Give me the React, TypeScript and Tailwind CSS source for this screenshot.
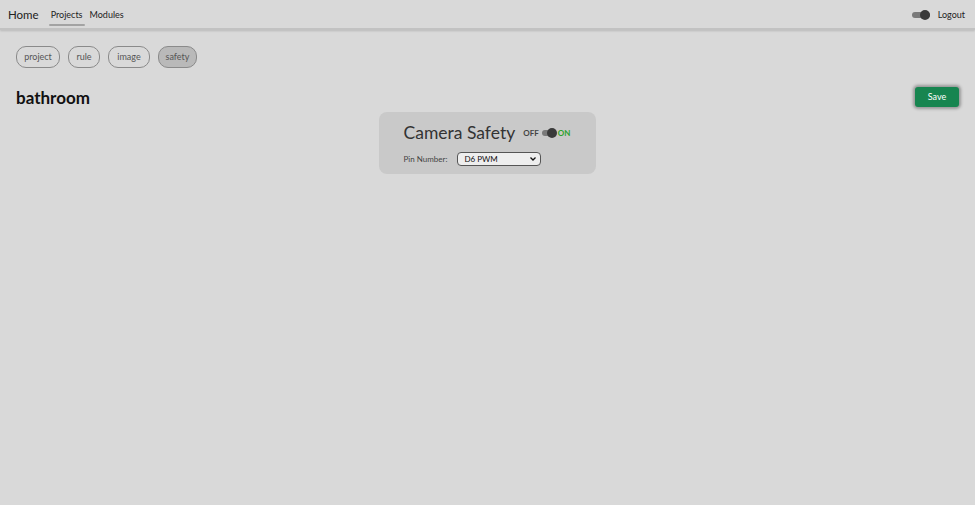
import { useState } from "react";

const tabs = [
  { label: "project", w: "w-[44px]" },
  { label: "rule", w: "w-[32px]" },
  { label: "image", w: "w-[42px]" },
  { label: "safety", w: "w-[39px]" },
];

export default function App() {
  const [active] = useState("safety");

  return (
    <div
      className="min-h-[505px] w-full bg-[#d9d9d9] text-[#222]"
      style={{ fontFamily: 'Lato, "Noto Sans", sans-serif' }}
    >
      {/* top bar */}
      <nav className="flex h-[30px] items-center justify-between border-b-2 border-[#c2c2c2] bg-[#d9d9d9] px-2 pt-[1px] shadow-[0_1px_2px_rgba(0,0,0,0.15)]">
        <div className="flex items-center">
          <span className="text-[11.5px] text-[#222]">Home</span>
          <div className="ml-[12px] flex items-center gap-[7px] text-[9px]">
            <span className="relative">
              Projects
              <span className="absolute -bottom-[5px] -left-[2px] -right-[2px] h-[2px] rounded bg-[#a3a3a3]" />
            </span>
            <span>Modules</span>
          </div>
        </div>
        <div className="flex items-center gap-[8px] pr-[2px]">
          <div className="relative h-[6px] w-[18px] rounded-full bg-[#7a7a7a]">
            <span className="absolute -top-[2px] right-0 h-[10px] w-[10px] rounded-full bg-[#3a3a3a]" />
          </div>
          <span className="text-[9px]">Logout</span>
        </div>
      </nav>

      <div className="px-4 pt-[16px]">
        <div className="flex gap-2">
          {tabs.map((t) => (
            <button
              key={t.label}
              className={`h-[22px] ${t.w} rounded-[10px] border border-[#8a8a8a] text-[9px] text-[#555] ${
                t.label === active ? "bg-[#b9b9b9]" : "bg-transparent"
              }`}
            >
              {t.label}
            </button>
          ))}
        </div>

        <div className="mt-[19px] flex items-start justify-between">
          <h1 className="pt-[1px] text-[17px] font-bold leading-[20px] text-[#111]">bathroom</h1>
          <button className="h-[20px] w-[44px] rounded-[3px] bg-[#178550] text-[9px] text-white shadow-[0_0_3px_2px_rgba(0,0,0,0.3)]">
            Save
          </button>
        </div>

        <div className="flex justify-center">
          <div className="mt-[4px] ml-[-1px] h-[62px] w-[217px] rounded-[8px] bg-[#c9c9c9] pl-[25px] pt-[9px]">
            <div className="flex items-center whitespace-nowrap">
              <span className="text-[17.5px] leading-[24px] text-[#333]">Camera Safety</span>
              <span className="ml-[8px] text-[8px] font-bold text-[#444]">OFF</span>
              <div className="relative ml-[3px] h-[6px] w-[14px] rounded-full bg-[#7a7a7a]">
                <span className="absolute -top-[2px] right-[-1px] h-[10px] w-[10px] rounded-full bg-[#3a3a3a]" />
              </div>
              <span className="ml-[2px] text-[8px] font-bold text-[#2ca12c]">ON</span>
            </div>
            <div className="mt-[7px] flex items-center">
              <span className="text-[8px] text-[#444]">Pin Number:</span>
              <div className="relative ml-[10px]">
                <select
                  defaultValue="D6 PWM"
                  className="block h-[14px] w-[84px] appearance-none rounded-[4px] border border-[#555] bg-[#eeeeee] px-[6px] py-0 text-[8px] leading-[12px] text-[#111]"
                >
                  <option>D6 PWM</option>
                  <option>D5 PWM</option>
                  <option>D3 PWM</option>
                </select>
                <svg
                  className="pointer-events-none absolute right-[5px] top-[5px]"
                  width="6"
                  height="4"
                  viewBox="0 0 6 4"
                >
                  <path d="M0.5 0.5 L3 3 L5.5 0.5" stroke="#111" strokeWidth="1.3" fill="none" />
                </svg>
              </div>
            </div>
          </div>
        </div>
      </div>
    </div>
  );
}
